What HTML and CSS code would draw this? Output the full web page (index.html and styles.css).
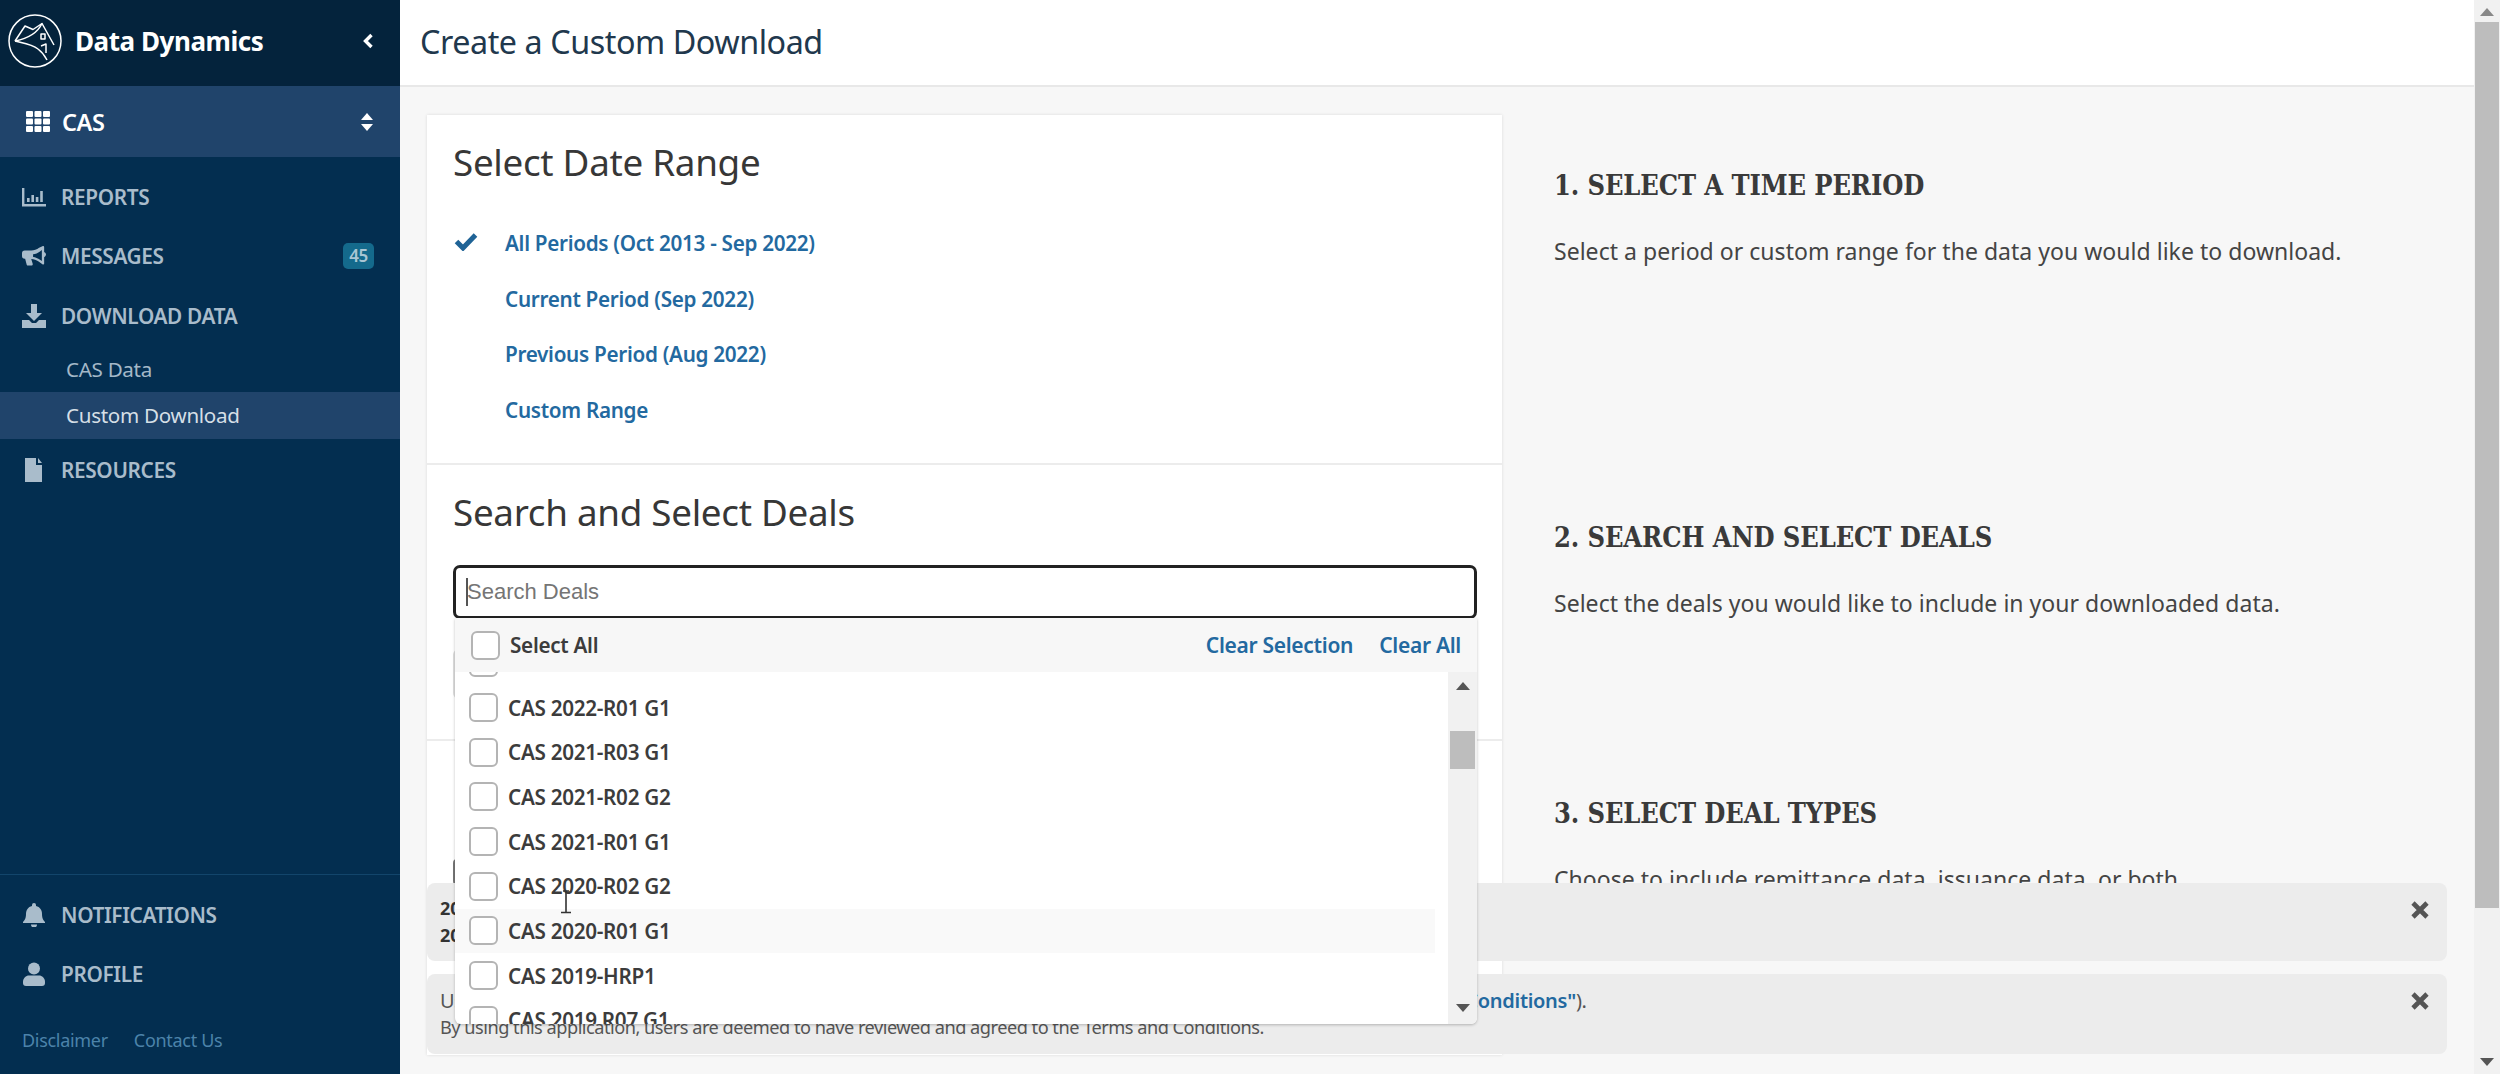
FILE: index.html
```html
<!DOCTYPE html>
<html lang="en">
<head>
<meta charset="utf-8">
<title>Create a Custom Download</title>
<link rel="stylesheet" href="styles.css">
</head>
<body>
<div class="app">
  <aside class="sidebar">
    <div class="brand">
      <svg class="logo" viewBox="0 0 54 54" fill="none" stroke="#fff" stroke-width="1.500" stroke-linejoin="round">
        <circle cx="27" cy="27" r="26"/>
        <path d="M7 27 L17 12 L25 15.500 L34 9.500 L46 31"/>
        <path d="M34 9.500 C30 18 22 24 7 27"/>
        <path d="M7 27 C15 29 24 30 30 35 C34 38 37 42 39 46"/>
        <path d="M33 20 h4 v5 h-4 z"/>
        <path d="M33 32 l5 -2 v9"/>
      </svg>
      <span class="brand-name">Data Dynamics</span>
      <svg class="chev" viewBox="0 0 12 16"><path d="M9.500 2 L3.500 8 L9.500 14" fill="none" stroke="#fff" stroke-width="3.400"/></svg>
    </div>
    <div class="switcher">
      <svg class="grid-icon" viewBox="0 0 24 21" fill="#fff">
        <rect x="0" y="0" width="7" height="6" rx="1"/><rect x="8.500" y="0" width="7" height="6" rx="1"/><rect x="17" y="0" width="7" height="6" rx="1"/>
        <rect x="0" y="7.500" width="7" height="6" rx="1"/><rect x="8.500" y="7.500" width="7" height="6" rx="1"/><rect x="17" y="7.500" width="7" height="6" rx="1"/>
        <rect x="0" y="15" width="7" height="6" rx="1"/><rect x="8.500" y="15" width="7" height="6" rx="1"/><rect x="17" y="15" width="7" height="6" rx="1"/>
      </svg>
      <span class="switcher-name">CAS</span>
      <svg class="updown" viewBox="0 0 12 18" fill="#fff"><path d="M6 0 L12 7 H0 Z"/><path d="M6 18 L12 11 H0 Z"/></svg>
    </div>
    <nav class="nav">
      <a class="nav-item">
        <svg class="nav-icon" viewBox="0 0 24 20" fill="#a9bccb"><path d="M0 1h2.400v16H24v2.400H0z"/><rect x="5" y="11" width="2.600" height="4"/><rect x="9.400" y="8" width="2.600" height="7"/><rect x="13.800" y="10" width="2.600" height="5"/><rect x="18.200" y="4" width="2.600" height="11"/></svg>
        <span>REPORTS</span>
      </a>
      <a class="nav-item">
        <svg class="nav-icon" viewBox="0 0 26 22" fill="#a9bccb"><path d="M26 9.500a3 3 0 0 1-2 2.800V19c0 1-1 1.600-1.900 1L18 17c-2.500-1.700-5-2.500-8-2.800l1.600 5.300c.3 1-.4 1.900-1.400 1.900H6.500c-.7 0-1.200-.4-1.400-1L3.400 14H3a3 3 0 0 1-3-3V8a3 3 0 0 1 3-3h7c3 0 6-1 8.500-3L22.100.4C23-.2 24 .4 24 1.400v5.300a3 3 0 0 1 2 2.800zM21.500 4.500 19.500 6c-2.300 1.700-5 2.800-7.500 3v3c2.500.3 5.200 1.300 7.500 3l2 1.500z"/></svg>
        <span>MESSAGES</span>
        <b class="badge">45</b>
      </a>
      <a class="nav-item">
        <svg class="nav-icon" viewBox="0 0 24 24" fill="#a9bccb"><path d="M9 0h6v9h5l-8 8-8-8h5z"/><path d="M0 16h7l3 3h4l3-3h7v8H0z"/></svg>
        <span>DOWNLOAD DATA</span>
      </a>
      <a class="nav-sub">CAS Data</a>
      <a class="nav-sub nav-sub-active">Custom Download</a>
      <a class="nav-item nav-after-sub">
        <svg class="nav-icon" viewBox="0 0 24 24" fill="#a9bccb"><path d="M3 0h11v7h6v17H3z"/><path d="M16 0l4 5h-4z"/></svg>
        <span>RESOURCES</span>
      </a>
    </nav>
    <div class="side-bottom">
      <a class="nav-item">
        <svg class="nav-icon" viewBox="0 0 24 24" fill="#a9bccb"><path d="M12 0a2 2 0 0 1 2 2v1c4 1 6 4 6 8 0 5 2 7 3 8v1H1v-1c1-1 3-3 3-8 0-4 2-7 6-8V2a2 2 0 0 1 2-2z"/><path d="M9 21.500h6a3 3 0 0 1-6 0z"/></svg>
        <span>NOTIFICATIONS</span>
      </a>
      <a class="nav-item">
        <svg class="nav-icon" viewBox="0 0 24 24" fill="#a9bccb"><circle cx="12" cy="6.500" r="6"/><path d="M1 20c0-4 3-6.500 6-6.500h10c3 0 6 2.500 6 6.500v1a3 3 0 0 1-3 3H4a3 3 0 0 1-3-3z"/></svg>
        <span>PROFILE</span>
      </a>
      <div class="side-links"><a>Disclaimer</a><a>Contact Us</a></div>
    </div>
  </aside>

  <main class="main">
    <header class="topbar"><h1>Create a Custom Download</h1></header>
    <div class="content">
      <div class="panel">
        <section class="block block-date">
          <h2>Select Date Range</h2>
          <ul class="periods">
            <li class="period"><svg class="check" viewBox="0 0 24 19"><path d="M2.500 9.500 L9 16 L21.500 3" fill="none" stroke="#1f6396" stroke-width="5"/></svg><a>All Periods (Oct 2013 - Sep 2022)</a></li>
            <li class="period"><a>Current Period (Sep 2022)</a></li>
            <li class="period"><a>Previous Period (Aug 2022)</a></li>
            <li class="period"><a>Custom Range</a></li>
          </ul>
        </section>
        <section class="block block-deals">
          <h2>Search and Select Deals</h2>
          <div class="search-box"><span class="caret"></span><span class="placeholder">Search Deals</span></div>
          <div class="under-field"></div>
        </section>
        <section class="block block-types"><span class="under-check"></span></section>
      </div>
      <div class="help">
        <section class="help-item"><h3>1. SELECT A TIME PERIOD</h3><p>Select a period or custom range for the data you would like to download.</p></section>
        <section class="help-item"><h3>2. SEARCH AND SELECT DEALS</h3><p>Select the deals you would like to include in your downloaded data.</p></section>
        <section class="help-item"><h3>3. SELECT DEAL TYPES</h3><p>Choose to include remittance data, issuance data, or both.</p></section>
      </div>
    </div>

    <div class="alert alert-one">
      <svg class="close" viewBox="0 0 20 20"><path d="M3 3 L17 17 M17 3 L3 17" stroke="#555" stroke-width="4.600"/></svg>
      <p class="alert-bold">2022</p>
      <p class="alert-bold">2022</p>
    </div>
    <div class="alert alert-two">
      <svg class="close" viewBox="0 0 20 20"><path d="M3 3 L17 17 M17 3 L3 17" stroke="#555" stroke-width="4.600"/></svg>
      <p class="alert-use">Use of this application and of the data within it is subject to the terms and conditions of this site (the <a>"Terms and Conditions"</a>).</p>
      <p class="alert-by">By using this application, users are deemed to have reviewed and agreed to the Terms and Conditions.</p>
    </div>

    <div class="dropdown">
      <div class="dd-head">
        <span class="box"></span><span class="dd-all">Select All</span>
        <a class="dd-link dd-link-first">Clear Selection</a><a class="dd-link">Clear All</a>
      </div>
      <div class="dd-body">
        <div class="dd-list">
          <div class="dd-row dd-row-clipped"><span class="box"></span></div>
          <div class="dd-row"><span class="box"></span><span>CAS 2022-R01 G1</span></div>
          <div class="dd-row"><span class="box"></span><span>CAS 2021-R03 G1</span></div>
          <div class="dd-row"><span class="box"></span><span>CAS 2021-R02 G2</span></div>
          <div class="dd-row"><span class="box"></span><span>CAS 2021-R01 G1</span></div>
          <div class="dd-row"><span class="box"></span><span>CAS 2020-R02 G2</span></div>
          <div class="dd-row dd-row-hover"><span class="box"></span><span>CAS 2020-R01 G1</span></div>
          <div class="dd-row"><span class="box"></span><span>CAS 2019-HRP1</span></div>
          <div class="dd-row"><span class="box"></span><span>CAS 2019 R07 G1</span></div>
        </div>
        <div class="dd-scroll">
          <svg class="arrow" viewBox="0 0 14 8"><path d="M7 0 L14 8 H0 Z" fill="#555"/></svg>
          <span class="dd-thumb"></span>
          <svg class="arrow arrow-down" viewBox="0 0 14 8"><path d="M7 8 L14 0 H0 Z" fill="#555"/></svg>
        </div>
      </div>
    </div>
    <svg class="ibeam" viewBox="0 0 12 24"><path d="M3 1 H9 M6 1 V22 M1 22.500 H11" stroke="#333" stroke-width="1.600" fill="none"/></svg>
  </main>

  <div class="page-scroll">
    <svg class="arrow" viewBox="0 0 14 8"><path d="M7 0 L14 8 H0 Z" fill="#888"/></svg>
    <span class="page-thumb"></span>
    <svg class="arrow arrow-down" viewBox="0 0 14 8"><path d="M7 8 L14 0 H0 Z" fill="#555"/></svg>
  </div>
</div>
</body>
</html>
```
FILE: styles.css
```css
* { box-sizing: border-box; }
html, body { margin: 0; padding: 0; height: 100%; overflow: hidden; }
body { font-family: "Noto Sans", "Open Sans", sans-serif; color: #333; background: #f7f7f7; }
a { color: inherit; text-decoration: none; }
h1, h2, h3, p, ul { margin: 0; padding: 0; }
ul { list-style: none; }

.app { display: flex; width: 2500px; height: 1074px; overflow: hidden; }

/* sidebar */
.sidebar { width: 400px; flex: none; display: flex; flex-direction: column; background: #032e50; }
.brand { height: 86px; flex: none; display: flex; align-items: center; padding: 0 26px 5px 8px; background: #04233c; }
.logo { width: 54px; height: 54px; flex: none; }
.brand-name { margin-left: 13px; font-size: 26px; font-weight: 700; color: #fff; letter-spacing: -.45px; flex: 1; }
.chev { width: 12px; height: 16px; }
.switcher { height: 71px; flex: none; display: flex; align-items: center; padding: 0 27px 0 26px; background: #20446b; }
.grid-icon { width: 24px; height: 21px; flex: none; }
.switcher-name { margin-left: 12px; font-size: 23.500px; font-weight: 600; color: #fff; flex: 1; letter-spacing: -.4px; }
.updown { width: 12px; height: 18px; }

.nav { display: flex; flex-direction: column; padding-top: 10px; }
.nav-item { height: 59.500px; flex: none; display: flex; align-items: center; padding: 0 26px 0 22px; font-size: 20.800px; font-weight: 600; color: #a9bccb; letter-spacing: -.35px; }
.nav-icon { width: 24px; height: 24px; flex: none; margin-right: 15px; }
.nav-item > span { flex: 1; }
.badge { background: #146a8c; color: #a9c6d4; font-size: 17px; font-weight: 600; padding: 3px 6px; border-radius: 5px; line-height: 20px; }
.nav-sub { height: 47px; flex: none; display: flex; align-items: center; padding-left: 66px; font-size: 20.600px; color: #a3b8c8; letter-spacing: -.3px; }
.nav-sub-active { background: #20446b; color: #d5dfe6; margin-top: -1px; }
.nav-after-sub { margin-top: 2px; }

.side-bottom { margin-top: auto; display: flex; flex-direction: column; border-top: 1px solid #12456b; padding-top: 10px; height: 200px; }
.side-links { display: flex; gap: 26px; padding: 24px 0 0 22px; font-size: 18px; color: #4c83aa; letter-spacing: -.3px; }

/* main */
.main { flex: 1; min-width: 0; position: relative; display: flex; flex-direction: column; }
.topbar { height: 87px; flex: none; display: flex; align-items: center; padding: 0 0 3px 20px; background: #fff; border-bottom: 2px solid #e8e8e8; }
h1 { font-size: 32.300px; font-weight: 400; color: #21384d; letter-spacing: -.45px; }
.content { flex: 1; min-height: 0; display: flex; overflow: hidden; padding: 28px 0 0 27px; }
.panel { width: 1075px; flex: none; height: 940px; background: #fff; box-shadow: 0 0 3px rgba(0,0,0,.12); }
.block { padding: 0 27px; border-bottom: 2px solid #ececec; }
.block-date { height: 350px; }
.block-deals { height: 276px; }
.block-types { height: 314px; border-bottom: 0; padding-top: 118px; }
h2 { font-size: 36.800px; font-weight: 400; color: #373737; margin-left: -1px; padding-top: 22px; line-height: 50px; letter-spacing: -.3px; }
.periods { margin-top: 28.500px; }
.period { position: relative; height: 55.500px; display: flex; align-items: center; padding-left: 51px; font-size: 20.700px; font-weight: 600; color: #2369a0; letter-spacing: -.3px; }
.check { position: absolute; left: 0; top: 16px; width: 24px; height: 19px; }
.search-box { margin-top: 28px; margin-left: -1px; width: 1024px; height: 54px; border: 3px solid #222; border-radius: 7px; display: flex; align-items: center; padding-left: 10px; background: #fff; }
.caret { width: 2px; height: 28px; background: #555; margin-right: -1px; }
.placeholder { font-family: "Liberation Sans", Arial, sans-serif; font-size: 22px; color: #757575; }
.under-field { margin: 30px 0 0 -1px; height: 50px; border: 2px solid #ddd; border-radius: 6px; width: 40px; }
.under-check { display: block; margin-left: -1px; width: 20px; height: 26px; border: 2px solid #777; border-radius: 4px; }

.help { flex: none; display: flex; flex-direction: column; padding: 55px 0 0 52px; }
.help-item { height: 352px; flex: none; }
.help-item:nth-child(2) { height: 276px; }
h3 { font-family: "DejaVu Serif", serif; font-stretch: condensed; font-size: 27px; font-weight: 700; color: #3a3a3a; line-height: 32px; letter-spacing: -.1px; }
.help p { margin-top: 33px; font-size: 23px; color: #444; line-height: 32px; letter-spacing: .03px; }

.alert { position: absolute; left: 27px; width: 2020px; background: #ececec; border-radius: 8px; }
.alert-one { top: 883px; height: 78px; padding: 12px 0 0 13px; }
.alert-two { top: 974px; height: 80px; }
.close { position: absolute; top: 17px; right: 17px; width: 20px; height: 20px; }
.alert-bold { font-size: 18px; font-weight: 700; line-height: 27px; color: #333; }
.alert-use { position: absolute; left: 13px; top: 13px; font-size: 20px; letter-spacing: -.3px; white-space: nowrap; color: #555; }
.alert-use a { color: #2369a0; font-weight: 600; }
.alert-by { position: absolute; left: 13px; top: 41px; font-size: 18.200px; color: #555; letter-spacing: -.5px; white-space: nowrap; }

/* dropdown */
.dropdown { position: absolute; left: 55px; top: 618px; width: 1022px; height: 406px; background: #fff; border-radius: 0 0 6px 6px; box-shadow: 0 1px 3px rgba(0,0,0,.25); display: flex; flex-direction: column; overflow: hidden; }
.box { width: 29px; height: 29px; flex: none; border: 2px solid #b4b4b4; border-radius: 6px; background: #fff; }
.dd-head { height: 54px; flex: none; display: flex; align-items: center; padding: 0 16px 0 16px; background: #f7f7f7; font-size: 20.700px; font-weight: 600; letter-spacing: -.3px; color: #3c3c3c; }
.dd-all { margin-left: 10px; margin-right: auto; }
.dd-link { color: #2369a0; font-size: 21px; }
.dd-link-first { margin-right: 26px; }
.dd-body { flex: 1; min-height: 0; display: flex; }
.dd-list { flex: 1; min-width: 0; overflow: hidden; padding: 0 13px 0 14px; }
.dd-row { height: 44.700px; display: flex; align-items: center; gap: 10px; font-size: 20.700px; font-weight: 600; letter-spacing: -.3px; color: #3c3c3c; }
.dd-row-clipped { margin-top: -31.500px; }
.dd-row-hover { background: #f9f9f9; margin-left: -14px; padding-left: 14px; }
.dd-scroll { width: 29px; flex: none; background: #f1f1f1; display: flex; flex-direction: column; align-items: center; padding: 10px 0 12px; }
.arrow { width: 14px; height: 8px; flex: none; }
.arrow-down { margin-top: auto; }
.dd-thumb { width: 25px; height: 38px; margin-top: 41px; background: #bdbdbd; }
.ibeam { position: absolute; left: 160px; top: 890px; width: 12px; height: 24px; }

.page-scroll { width: 26px; flex: none; background: #f1f1f1; display: flex; flex-direction: column; align-items: center; padding: 8px 0 8px; }
.page-thumb { width: 24px; height: 886px; margin-top: 6px; background: #bdbdbd; }
```
